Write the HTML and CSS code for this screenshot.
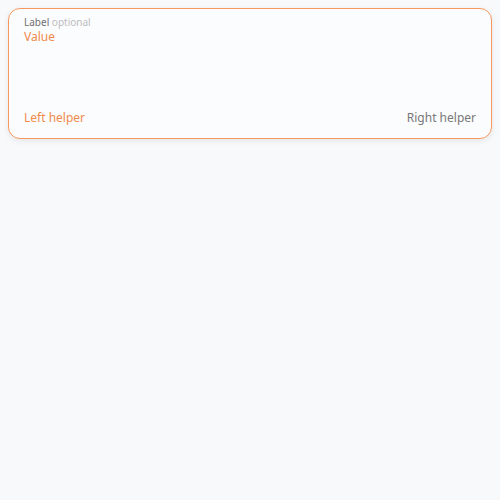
FILE: index.html
```html
<!DOCTYPE html>
<html>
<head>
<meta charset="utf-8">
<link rel="stylesheet" href="styles.css">
</head>
<body>
<div class="field">
  <div class="label">Label <span class="optional">optional</span></div>
  <div class="value">Value</div>
  <div class="helpers">
    <span class="helper-left">Left helper</span>
    <span class="helper-right">Right helper</span>
  </div>
</div>
</body>
</html>
```
FILE: styles.css
```css
html, body {
  margin: 0;
  padding: 0;
  background: #f8f9fa;
}
body {
  padding: 8px;
  font-family: "Noto Sans", sans-serif;
}
.field {
  box-sizing: border-box;
  width: 484px;
  height: 131px;
  border: 1px solid #f7995f;
  border-radius: 12px;
  background: #fbfcfd;
  box-shadow: 0 2px 6px rgba(0, 0, 0, 0.08);
  padding: 6px 15px 12px 15px;
  display: flex;
  flex-direction: column;
}
.label {
  font-size: 10px;
  line-height: 14px;
  color: #6f7070;
}
.optional {
  color: #bcbdbe;
}
.value {
  font-size: 12px;
  line-height: 16px;
  color: #ef8a4c;
}
.helpers {
  margin-top: auto;
  display: flex;
  justify-content: space-between;
  font-size: 12px;
  line-height: 16px;
}
.helper-left {
  color: #ef8a4c;
}
.helper-right {
  color: #777878;
}
```
